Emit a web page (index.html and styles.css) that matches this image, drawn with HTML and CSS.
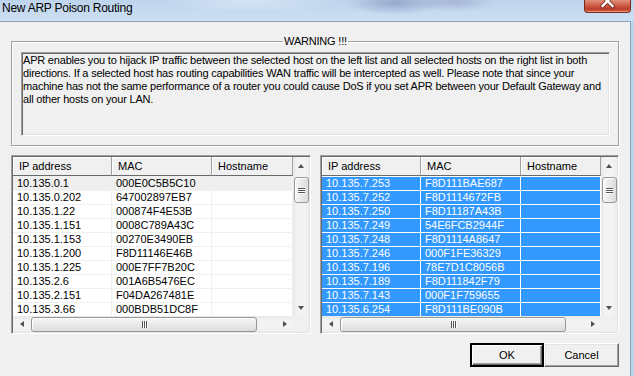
FILE: index.html
```html
<!DOCTYPE html>
<html lang="en">

<head>
    <meta charset="UTF-8">
    <title>New ARP Poison Routing</title>
    <link rel="stylesheet" href="styles.css">
</head>

<body>
    <div class="window">
        <div class="titlebar">
            <span class="title">New ARP Poison Routing</span>
            <span class="close">
                <svg width="45" height="12" viewBox="0 0 45 12">
                    <path d="M17.5 -4 L27.5 6 M27.5 -4 L17.5 6" stroke="#5b1d12" stroke-width="4.2" stroke-linecap="square" fill="none" opacity="0.7"/>
                    <path d="M17.5 -4 L27.5 6 M27.5 -4 L17.5 6" stroke="#ffffff" stroke-width="2.4" stroke-linecap="square" fill="none"/>
                </svg>
            </span>
        </div>

        <div class="client">
            <fieldset class="warning">
                <legend>WARNING !!!</legend>
                <div class="message">
                    APR enables you to hijack IP traffic between the selected host on the left list and all selected hosts on the right list in both<br>
                    directions. If a selected host has routing capabilities WAN traffic will be intercepted as well. Please note that since your<br>
                    machine has not the same performance of a router you could cause DoS if you set APR between your Default Gateway and<br>
                    all other hosts on your LAN.
                </div>
            </fieldset>

            <div class="lists">
                <div class="listview left">
                    <div class="view">
                        <div class="header">
                            <div>IP address</div>
                            <div>MAC</div>
                            <div>Hostname</div>
                        </div>
                        <div class="row focus"><span>10.135.0.1</span><span>000E0C5B5C10</span><span></span></div>
                        <div class="row"><span>10.135.0.202</span><span>647002897EB7</span><span></span></div>
                        <div class="row"><span>10.135.1.22</span><span>000874F4E53B</span><span></span></div>
                        <div class="row"><span>10.135.1.151</span><span>0008C789A43C</span><span></span></div>
                        <div class="row"><span>10.135.1.153</span><span>00270E3490EB</span><span></span></div>
                        <div class="row"><span>10.135.1.200</span><span>F8D11146E46B</span><span></span></div>
                        <div class="row"><span>10.135.1.225</span><span>000E7FF7B20C</span><span></span></div>
                        <div class="row"><span>10.135.2.6</span><span>001A6B5476EC</span><span></span></div>
                        <div class="row"><span>10.135.2.151</span><span>F04DA267481E</span><span></span></div>
                        <div class="row"><span>10.135.3.66</span><span>000BDB51DC8F</span><span></span></div>
                        <div class="hscroll">
                            <span class="btn-arrow"><i class="tri left"></i></span>
                            <span class="hthumb"><i></i><i></i><i></i></span>
                            <span class="btn-arrow"><i class="tri right"></i></span>
                        </div>
                    </div>
                    <div class="vscroll">
                        <span class="btn-arrow"><i class="tri up"></i></span>
                        <span class="vthumb"><i></i><i></i><i></i></span>
                        <span class="btn-arrow down-btn"><i class="tri down"></i></span>
                        <span class="corner"></span>
                    </div>
                </div>

                <div class="listview right">
                    <div class="view">
                        <div class="header">
                            <div>IP address</div>
                            <div>MAC</div>
                            <div>Hostname</div>
                        </div>
                        <div class="row sel"><span>10.135.7.253</span><span>F8D111BAE687</span><span></span></div>
                        <div class="row sel"><span>10.135.7.252</span><span>F8D1114672FB</span><span></span></div>
                        <div class="row sel"><span>10.135.7.250</span><span>F8D11187A43B</span><span></span></div>
                        <div class="row sel"><span>10.135.7.249</span><span>54E6FCB2944F</span><span></span></div>
                        <div class="row sel"><span>10.135.7.248</span><span>F8D1114A8647</span><span></span></div>
                        <div class="row sel"><span>10.135.7.246</span><span>000F1FE36329</span><span></span></div>
                        <div class="row sel"><span>10.135.7.196</span><span>78E7D1C8056B</span><span></span></div>
                        <div class="row sel"><span>10.135.7.189</span><span>F8D111842F79</span><span></span></div>
                        <div class="row sel"><span>10.135.7.143</span><span>000F1F759655</span><span></span></div>
                        <div class="row sel"><span>10.135.6.254</span><span>F8D111BE090B</span><span></span></div>
                        <div class="hscroll">
                            <span class="btn-arrow"><i class="tri left"></i></span>
                            <span class="hthumb"><i></i><i></i><i></i></span>
                            <span class="btn-arrow"><i class="tri right"></i></span>
                        </div>
                    </div>
                    <div class="vscroll">
                        <span class="btn-arrow"><i class="tri up"></i></span>
                        <span class="vthumb"><i></i><i></i><i></i></span>
                        <span class="btn-arrow down-btn"><i class="tri down"></i></span>
                        <span class="corner"></span>
                    </div>
                </div>
            </div>

            <div class="buttons">
                <button class="btn default">OK</button>
                <button class="btn cancel">Cancel</button>
            </div>
        </div>
    </div>
</body>

</html>
```

FILE: styles.css
```css
* {
    margin: 0;
    padding: 0;
    box-sizing: border-box;
}

body {
    width: 634px;
    height: 376px;
    overflow: hidden;
    background: #bcd3ec;
    font-family: "Liberation Sans", Arial, sans-serif;
    font-size: 11px;
    color: #000;
}

.window {
    display: flex;
    flex-direction: column;
    height: 376px;
}

/* title bar (aero glass) */
.titlebar {
    height: 21px;
    display: flex;
    justify-content: space-between;
    align-items: flex-start;
    background:
        radial-gradient(ellipse 50px 12px at 395px 3px, rgba(70, 85, 140, 0.35), transparent),
        radial-gradient(ellipse 40px 10px at 455px 2px, rgba(110, 110, 160, 0.3), transparent),
        radial-gradient(ellipse 90px 10px at 250px 2px, rgba(255, 255, 255, 0.35), transparent),
        linear-gradient(#bed4ed, #cddff2);
}

.title {
    font-size: 12px;
    line-height: 14px;
    letter-spacing: -0.25px;
    padding: 1px 0 0 2px;
}

.close {
    display: flex;
    width: 47px;
    height: 13px;
    margin-right: 3px;
    border: 1px solid #7b2a1c;
    border-top: none;
    border-radius: 0 0 4px 4px;
    background: linear-gradient(#e0907c, #cf5e48 45%, #bd3f2b 70%, #c65a3f);
    box-shadow: inset 0 -1px 0 rgba(255, 190, 160, 0.6);
}

/* dialog client area */
.client {
    flex: 1;
    width: 631px;
    background: #f0f0f0;
    border-top: 1px solid #8fa3ba;
    border-right: 1px solid #8fa3ba;
}

.warning {
    margin: 13px 0 0 11px;
    width: 608px;
    height: 111px;
    border: 1px solid #a0a0a0;
    box-shadow: inset 1px 1px #fff, 1px 1px #fff;
    padding: 4px 8px 0 9px;
}

.warning legend {
    margin: 0 auto;
    padding: 0 1px;
    line-height: 13px;
    letter-spacing: -0.2px;
}

.message {
    height: 84px;
    padding: 1px 0 0 1px;
    line-height: 13px;
    letter-spacing: -0.2px;
    white-space: nowrap;
    overflow: hidden;
    border: 1px solid;
    border-color: #a0a0a0 #fff #fff #a0a0a0;
    box-shadow: inset 1px 1px #696969, inset -1px -1px #e3e3e3;
}

/* list views */
.lists {
    display: flex;
    gap: 9px;
    margin: 9px 0 0 11px;
}

.listview {
    display: flex;
    height: 179px;
    padding: 1px;
    background: #fff;
    border: 1px solid;
    border-color: #a0a0a0 #fff #fff #a0a0a0;
    box-shadow: inset 1px 1px #696969, inset -1px -1px #e3e3e3;
}

.listview.left {
    width: 300px;
}

.listview.right {
    width: 299px;
}

.view {
    flex: 1;
    display: flex;
    flex-direction: column;
}

.header,
.row {
    display: grid;
    grid-template-columns: 99px 100px 1fr;
}

.header {
    height: 19px;
}

.header div {
    background: #f0f0f0;
    border-right: 1px solid #a0a0a0;
    border-bottom: 1px solid #696969;
    box-shadow: inset 1px 1px #fff;
    padding: 2px 0 0 6px;
    line-height: 14px;
}

.row {
    height: 14px;
    border-top: 1px solid #f0f0f0;
}

.row span {
    border-right: 1px solid #f0f0f0;
    padding-left: 4px;
    line-height: 13px;
    white-space: nowrap;
}

.row.focus span {
    background: #efefef;
}

.row.sel {
    border-top-color: #fff;
}

.row.sel span {
    background: #3399ff;
    color: #fff;
    border-right-color: #fff;
}

/* scrollbars */
.hscroll {
    height: 16px;
    display: flex;
    align-items: center;
    background: linear-gradient(#e9e9e9, #f3f3f3 30%, #f3f3f3 70%, #ececec);
}

.vscroll {
    width: 16px;
    display: flex;
    flex-direction: column;
    align-items: center;
    background: linear-gradient(90deg, #e9e9e9, #f3f3f3 30%, #f3f3f3 70%, #ececec);
}

.btn-arrow {
    width: 17px;
    height: 17px;
    flex: none;
    display: flex;
    align-items: center;
    justify-content: center;
}

.down-btn {
    margin-top: auto;
}

.corner {
    width: 16px;
    height: 16px;
    background: #f0f0f0;
}

.tri {
    width: 0;
    height: 0;
    border: 4px solid transparent;
}

.tri.up {
    border-bottom: 4px solid #505050;
    border-top-width: 0;
    border-left-width: 3.5px;
    border-right-width: 3.5px;
}

.tri.down {
    border-top: 4px solid #505050;
    border-bottom-width: 0;
    border-left-width: 3.5px;
    border-right-width: 3.5px;
}

.tri.left {
    border-right: 4px solid #505050;
    border-left-width: 0;
    border-top-width: 3.5px;
    border-bottom-width: 3.5px;
}

.tri.right {
    border-left: 4px solid #505050;
    border-right-width: 0;
    border-top-width: 3.5px;
    border-bottom-width: 3.5px;
}

.vthumb {
    width: 15px;
    height: 26px;
    margin-top: 3px;
    border: 1px solid #979797;
    border-radius: 3px;
    background: linear-gradient(90deg, #f6f6f6, #eaeaea 50%, #dcdcdc);
    box-shadow: inset 1px 1px #fff;
    display: flex;
    flex-direction: column;
    align-items: center;
    justify-content: center;
    gap: 1px;
}

.vthumb i {
    width: 7px;
    height: 1px;
    background: #555;
    box-shadow: 0 1px #fff;
}

.hthumb {
    width: 226px;
    height: 15px;
    margin: 1px 0 0 1px;
    border: 1px solid #979797;
    border-radius: 3px;
    background: linear-gradient(#f6f6f6, #eaeaea 50%, #dcdcdc);
    box-shadow: inset 1px 1px #fff;
    display: flex;
    align-items: center;
    justify-content: center;
    gap: 1px;
    margin-right: auto;
}

.hthumb i {
    width: 1px;
    height: 7px;
    background: #555;
    box-shadow: 1px 0 #fff;
}

/* dialog buttons */
.buttons {
    display: flex;
    justify-content: flex-end;
    margin: 9px 11px 0 0;
}

.btn {
    width: 75px;
    height: 24px;
    font-family: "Liberation Sans", Arial, sans-serif;
    font-size: 11px;
    color: #000;
    background: #f0f0f0;
    border: 1px solid;
    border-color: #fff #696969 #696969 #fff;
    box-shadow: inset -1px -1px #a0a0a0, inset 1px 1px #e3e3e3;
}

.btn.default {
    width: 74px;
    outline: 1px solid #000;
    outline-offset: -1px;
    border: 2px solid;
    border-color: #000;
    box-shadow: inset 1px 1px #fff, inset -1px -1px #696969, inset -2px -2px #a0a0a0;
}
```
